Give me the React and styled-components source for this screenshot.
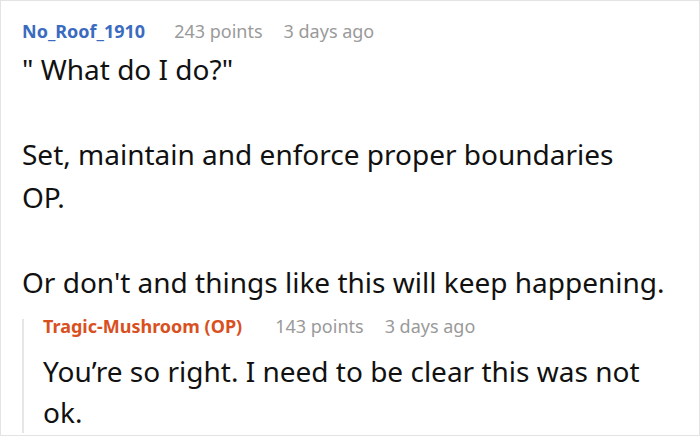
import styled, {createGlobalStyle} from "styled-components";

const GlobalStyle = createGlobalStyle`
    html, body {
        margin: 0;
        padding: 0;
        background: #fff;
    }
    body {
        font-family: "Noto Sans", "Open Sans", "DejaVu Sans", sans-serif;
    }
`;

const Card = styled.div`
    box-sizing: border-box;
    width: 700px;
    height: 436px;
    border: 1px solid #e3e3e3;
    padding: 17px 21px 0 21px;
    overflow: hidden;
    background: #fff;
`;

const Meta = styled.div`
    display: flex;
    align-items: baseline;
    font-size: 18px;
    line-height: ${props => props.$lh || 26}px;
    white-space: nowrap;

    & > .author {
        font-weight: bold;
        color: ${props => props.$op ? '#d9501f' : '#3b6bbf'};
        margin-right: ${props => props.$op ? 33 : 29}px;
    }

    & > .points {
        color: #9a9a9a;
        margin-right: 21px;
    }

    & > .time {
        color: #9a9a9a;
    }
`;

const Body = styled.div`
    margin-top: 4px;
    font-size: 28px;
    line-height: 42.5px;
    color: #111;

    & > p {
        margin: 0 0 42.5px 0;
    }

    & > p:last-child {
        margin-bottom: 0;
    }
`;

const Reply = styled.div`
    margin-top: 16px;
    border-left: 2px solid #e6e6e6;
    padding-left: 19px;
`;

const ReplyBody = styled.div`
    margin-top: 18px;
    margin-bottom: -14px;
    max-width: 630px;
    font-size: 28px;
    line-height: 41px;
    color: #111;
`;

function Comment({author, points, time, op, lh}) {
    return (
        <Meta $op={op} $lh={lh}>
            <span className="author">{author}</span>
            <span className="points">{points} points</span>
            <span className="time">{time}</span>
        </Meta>
    );
}

export default function App() {
    return (
        <>
            <GlobalStyle/>
            <Card>
                <Comment author="No_Roof_1910" points={243} time="3 days ago"/>
                <Body>
                    <p>" What do I do?"</p>
                    <p>Set, maintain and enforce proper boundaries<br/>OP.</p>
                    <p>Or don't and things like this will keep happening.</p>
                </Body>
                <Reply>
                    <Comment author="Tragic-Mushroom (OP)" points={143} time="3 days ago" op lh={14}/>
                    <ReplyBody>You’re so right. I need to be clear this was not ok.</ReplyBody>
                </Reply>
            </Card>
        </>
    );
}
